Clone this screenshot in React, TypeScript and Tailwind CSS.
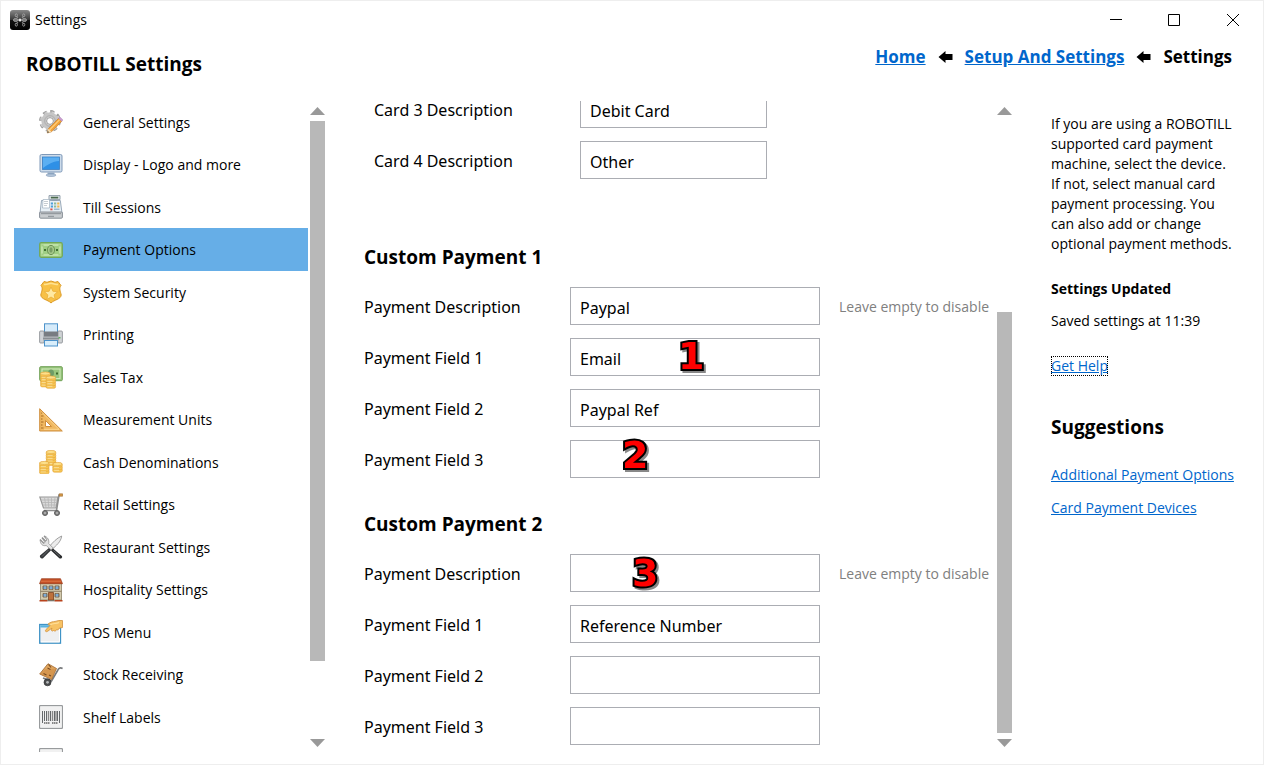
import React from "react";

type IconProps = { children: React.ReactNode };

function Icon({ children }: IconProps) {
  return (
    <svg className="size-6 shrink-0" viewBox="0 0 24 24" fill="none" aria-hidden="true">
      {children}
    </svg>
  );
}

function Coins({ x, y, n }: { x: number; y: number; n: number }) {
  const rows = Array.from({ length: n }, (_, i) => n - 1 - i);
  return (
    <g>
      {rows.map((i) => (
        <g key={i}>
          <rect x={x} y={y + i * 2.6} width="9.6" height="4" rx="1.6" fill="#f7c653" stroke="#e2a53a" strokeWidth=".6" />
          <rect x={x + 1.4} y={y + 1 + i * 2.6} width="5" height="1.4" fill="#fff0b8" />
        </g>
      ))}
      <ellipse cx={x + 4.8} cy={y + 1} rx="4.6" ry="1.6" fill="#fde08a" stroke="#e2a53a" strokeWidth=".6" />
    </g>
  );
}

const icons: Record<string, React.ReactNode> = {
  general: (
    <Icon>
      <circle cx="11" cy="11" r="9.4" stroke="#9a9a9a" strokeWidth="3" strokeDasharray="3.9 3.48" />
      <circle cx="11" cy="11" r="9.2" stroke="#cfcfcf" strokeWidth="1.6" strokeDasharray="3.3 4.08" strokeDashoffset="-.3" />
      <circle cx="11" cy="11" r="6.2" stroke="#c6c6c6" strokeWidth="5" />
      <circle cx="11" cy="11" r="5.4" stroke="#aaa" strokeWidth=".8" />
      <circle cx="11" cy="11" r="3.4" fill="#fff" stroke="#8f8f8f" strokeWidth=".9" />
      <path d="m8.200 23 1.200-4.300L19.600 8.300l3.200 3L12.500 21.800z" fill="#f2a33a" stroke="#bf7420" strokeWidth=".6" />
      <path d="M10.500 20 20.700 9.600" stroke="#ffd07c" strokeWidth="1.200" />
      <path d="m19.600 8.300 1.400-1.200 3 2.800-1.200 1.400z" fill="#c99bd0" stroke="#a983b3" strokeWidth=".4" />
      <path d="m8.200 23 1.200-4.300 3.100 3.100z" fill="#f6deb2" />
      <path d="m8.200 23 .6-2 1.400 1.300z" fill="#444" />
    </Icon>
  ),
  display: (
    <Icon>
      <rect x="1" y="1.500" width="22" height="17.500" rx="1.500" fill="#cddceb" stroke="#7f99b8" />
      <rect x="3.500" y="4" width="17" height="12.500" fill="#2e90e6" stroke="#3c7fc2" strokeWidth=".8" />
      <path d="M4 4.500h16V8c-7 .5-10 3-16 7z" fill="#6bb9f6" opacity=".75" />
      <path d="M8.500 19.500h7v2h-7z" fill="#8ea7c2" />
      <path d="M7 22c0-1.200 10-1.200 10 0 0 2-10 2-10 0z" fill="#b4c7dc" stroke="#8199b5" strokeWidth=".6" />
    </Icon>
  ),
  till: (
    <Icon>
      <path d="M10 .6h11v4H10z" fill="#e8edf1" stroke="#8996a3" strokeWidth=".9" />
      <path d="M11.800 1.700h7.500v1.800h-7.500z" fill="#49694b" />
      <path d="M12.500 4.500h6v1.500h-6z" fill="#9aa7b2" />
      <path d="M2.500 5.500h18.800L23 18H1z" fill="#e7eff5" stroke="#8496a8" strokeWidth=".8" />
      <path d="M4 4.500h6.500v8.500H3.500z" fill="#fff" stroke="#9fb0bf" strokeWidth=".7" />
      <path d="M5 6.500h4M5 8.500h4M5 10.500h3" stroke="#b9c0c6" strokeWidth=".8" />
      <path d="M11.800 7.500h2.200v2h-2.200zM11.800 10.500h2.200v2h-2.200z" fill="#4fa0da" />
      <path d="M15 7.500h2.200v2H15zM15 10.500h2.200v2H15z" fill="#8dbb9b" />
      <path d="M18.200 7.500h2.200v2h-2.200zM18.200 10.500h2.200v2h-2.200z" fill="#efb64e" />
      <path d="M11.300 13.500h2.200v1.800h-2.200z" fill="#d75346" />
      <path d="M15 13.500h5.500v1.500H15z" fill="#9db9cc" />
      <rect x=".6" y="17" width="22.800" height="6.200" rx="1" fill="#c9cdd0" stroke="#7d858d" strokeWidth=".9" />
      <path d="M2 18.700h20M9 21.300h6" stroke="#888e94" strokeWidth="1" />
    </Icon>
  ),
  payment: (
    <Icon>
      <rect x=".7" y="4.700" width="22.600" height="14.600" rx="1.500" fill="#9fce84" stroke="#74a853" strokeWidth="1.200" />
      <rect x="3" y="7" width="18" height="10" stroke="#d4edbd" strokeWidth="1.200" />
      <ellipse cx="12" cy="12" rx="3.600" ry="4.600" fill="#a5c989" stroke="#638a4e" strokeWidth=".9" />
      <ellipse cx="12" cy="12" rx="1.600" ry="2.800" fill="#789e64" />
      <path d="M5 11h2v2H5zm12 0h2v2h-2z" fill="#426f32" />
      <path d="M2.400 6.400h2.200v2.200H2.400zm17 0h2.200v2.200h-2.200zM2.400 15.400h2.200v2.200H2.400zm17 0h2.200v2.200h-2.200z" fill="#9fce84" />
    </Icon>
  ),
  security: (
    <Icon>
      <path d="M5 1.500 8 2.300 12 1l4 1.300 3-.8 3 4c-2.500 3-.4 6 .2 9.500-.4 4.500-7 4.600-10.200 8-3.200-3.400-9.800-3.500-10.200-8C2.400 11.500 4.500 8.500 2 5.500z" fill="#f8c146" stroke="#dc9a26" />
      <path d="M5 4.200c2 .9 5-.7 7-1 2 .3 5 1.900 7 1" stroke="#ffe291" strokeWidth="1.500" />
      <path d="m12 7 1.900 4.300 4.600.5-3.400 3.100 1 4.500L12 17l-4.100 2.400 1-4.500-3.400-3.100 4.600-.5z" fill="#ffe9a2" stroke="#e8aa32" strokeWidth=".7" />
    </Icon>
  ),
  printing: (
    <Icon>
      <rect x="5.500" y=".8" width="13" height="9" fill="#d6ebfa" stroke="#4d93cb" />
      <rect x=".6" y="8" width="4.600" height="12" rx="1" fill="#d0d3d6" stroke="#858a8f" strokeWidth=".8" />
      <rect x="18.800" y="8" width="4.600" height="12" rx="1" fill="#d0d3d6" stroke="#858a8f" strokeWidth=".8" />
      <path d="M4 9h16v9H4z" fill="#b5b9bd" />
      <path d="M5 8.500h14v5H5z" fill="#787c81" />
      <path d="M4 15.500h16" stroke="#8a8f93" strokeWidth="1.500" />
      <rect x="5.500" y="17.500" width="13" height="5.500" fill="#d9eefb" stroke="#4d93cb" />
      <path d="M19.500 14h2v1.500h-2z" fill="#62b45d" />
    </Icon>
  ),
  tax: (
    <Icon>
      <rect x=".7" y="1.700" width="22.600" height="14" rx="1" fill="#98c67d" stroke="#6f9f54" />
      <rect x="3" y="4" width="18" height="9.500" stroke="#d3ecbd" />
      <ellipse cx="12" cy="8" rx="3" ry="3.600" fill="#6e9c66" />
      <path d="M17 7.500h2v2h-2z" fill="#3c692b" />
      <Coins x={1.500} y={7.500} n={5} />
      <Coins x={7} y={11.500} n={4} />
    </Icon>
  ),
  measurement: (
    <Icon>
      <path fillRule="evenodd" clipRule="evenodd" d="M.7.700V23h22.600zM6.500 12.500l6 6h-6z" fill="#f0b860" stroke="#cf8f3e" />
      <path d="M2 5h1.500M2 8h2.500M2 11h1.500M2 14h2.500M2 17h1.500M2 20h2.500" stroke="#a66a22" />
      <path d="m2.500 4 17.500 17.300H5" stroke="#ffdc9b" strokeWidth=".8" />
    </Icon>
  ),
  cash: (
    <Icon>
      <Coins x={7.200} y={1} n={5} />
      <Coins x={0.500} y={12} n={4} />
      <Coins x={13.700} y={13} n={3} />
    </Icon>
  ),
  retail: (
    <Icon>
      <path d="M.8 4h18.200L17 15H4.500z" fill="#dadada" stroke="#989898" strokeWidth="1.200" />
      <path d="M2 7h16.500M3 9.500h15M3.500 12h14M5.500 4.500l1.500 10M9 4.500l.8 10M12.500 4.500v10M16 4.500l-1 10" stroke="#b5b5b5" strokeWidth=".8" />
      <path d="M22 2h-2l-2.500 15.500H5" stroke="#8c8c8c" strokeWidth="1.600" />
      <path d="M20.200.8h3.400v2.400h-3.400z" fill="#d89b47" stroke="#9a672b" strokeWidth=".6" />
      <circle cx="6" cy="20" r="2.500" fill="#808080" stroke="#5e5e5e" />
      <circle cx="18" cy="20" r="2.500" fill="#808080" stroke="#5e5e5e" />
      <circle cx="6" cy="20" r=".8" fill="#ddd" />
      <circle cx="18" cy="20" r=".8" fill="#ddd" />
    </Icon>
  ),
  restaurant: (
    <Icon>
      <path d="M22.700 1C18 3 14 7 10 12l3 2.500C17 10.500 22 7 22.700 1z" fill="#ececec" stroke="#8b8b8b" strokeWidth=".8" />
      <path d="m10.500 12.500 2.300 2L4 23.300C2 24 .4 22.500 1 20.500z" fill="#343638" />
      <path d="m1 4.500 4 4M3 2.500l4 4M5 1l4 4" stroke="#929292" strokeWidth="1.400" />
      <path d="M1.200 5c0 4 2.500 6.500 6 5.500l5 4.500 2-2-4.500-4.500C10.500 5 8.500 2 5.500 1L8 5 6.500 6.500 3 3l3 4.500L4.500 8.500z" fill="#e2e2e2" stroke="#8b8b8b" strokeWidth=".7" />
      <path d="m14 13.500 8.800 7.500c1.200 1.700-.8 3.300-2.500 2.200L12 15.500z" fill="#27292b" />
      <path d="m14.500 15.500 6.500 6M3 21.500l6.500-6.500" stroke="#777a7d" strokeWidth=".8" />
    </Icon>
  ),
  hospitality: (
    <Icon>
      <path d="M1.500 5h21v17h-21z" fill="#d3caae" stroke="#8c8266" strokeWidth=".8" />
      <path d="M2.500.700h19l2 5H.500z" fill="#c44f25" stroke="#9a3b1a" strokeWidth=".7" />
      <path d="M2 3.200h20" stroke="#e07845" strokeWidth="1" />
      <path d="M4 8h4v3.500H4zm6 0h4v3.500h-4zm6 0h4v3.500h-4zM4 15.500h4V19H4zm12 0h4V19h-4z" fill="#5a94ca" stroke="#7f6b52" strokeWidth="1" />
      <path d="M6 8v3.500M12 8v3.500M18 8v3.500M6 15.500V19M18 15.500V19" stroke="#d4e4f1" strokeWidth=".6" />
      <path d="M1.500 13.300h21" stroke="#8f7e63" strokeWidth="1" />
      <path d="M9.500 14.500h5V22h-5z" fill="#be713b" stroke="#7d4421" strokeWidth=".8" />
      <path d="M.5 22h8v1.500h-8zM15.500 22h8v1.500h-8z" fill="#b7431d" />
      <path d="M8.500 22h7v1.300h-7z" fill="#7c7568" />
    </Icon>
  ),
  pos: (
    <Icon>
      <rect x=".7" y="4.500" width="20.800" height="18.700" fill="#eeeff0" stroke="#3f93c6" strokeWidth="1.300" />
      <path d="M1.300 5.200h19.600V7.500H1.300z" fill="#58b2e1" />
      <path d="M2 21.800h18.500V9" stroke="#fff" />
      <path d="M23.500.500h-4C16 2 13 1 9.500 3.500 8 4.700 10.500 5.500 12 4.700L7 9.500c-1.500 1.800.2 3 2 1.500l4-3c-1.500 3 .2 3.700 1.500 2.500 1.500 1 2.500.5 3-.8 1.300.6 2.300-.3 2.700-1.500l3.300-.7z" fill="#f7c264" stroke="#d2913c" strokeWidth=".8" />
      <path d="M11 5c3-2 6-1 9-2.500" stroke="#ffdf98" strokeWidth="1.200" />
    </Icon>
  ),
  stock: (
    <Icon>
      <path d="M23.600 5.600c-2.600-1.400-4.200-.4-5.200 2.400L12.500 18 4 15" stroke="#77797b" strokeWidth="1.700" />
      <path d="M9 .7 17.500 5.500 12.500 16.500.7 11z" fill="#e0a65e" stroke="#9e662f" strokeWidth=".8" />
      <path d="m.7 11 5-4.500L17.500 5.500l-5 11z" fill="#c9863d" opacity=".5" />
      <path d="m9.500 1.500 2.500 3M8.500 5l3 1.500M10 12l2 1M4.500 10.500l3 1.500" stroke="#77491f" strokeWidth="1.100" />
      <circle cx="8.500" cy="19.300" r="3.500" fill="#4a4c4e" stroke="#2f3031" strokeWidth=".7" />
      <circle cx="8.500" cy="19.300" r="1.400" fill="#b4b7b9" />
    </Icon>
  ),
  labels: (
    <Icon>
      <rect x=".6" y=".6" width="22.800" height="22.800" rx=".6" fill="#fff" stroke="#989b9d" strokeWidth="1.200" />
      <path d="M2 2h20v20H2z" fill="#f1f1f1" />
      <path d="M3.500 6v12M5.500 6v10M7.500 6v10M11.500 6v10M15.500 6v10M18.500 6v10M20.500 6v12" stroke="#66696b" strokeWidth="1" />
      <path d="M9.500 6v10M13.500 6v10M17 6v10" stroke="#888" strokeWidth="1.400" />
      <path d="M5 18h6M13 18h6" stroke="#666" strokeWidth="1.400" strokeDasharray="1.500 .5" />
    </Icon>
  ),
};

const navItems: [string, string][] = [
  ["general", "General Settings"],
  ["display", "Display - Logo and more"],
  ["till", "Till Sessions"],
  ["payment", "Payment Options"],
  ["security", "System Security"],
  ["printing", "Printing"],
  ["tax", "Sales Tax"],
  ["measurement", "Measurement Units"],
  ["cash", "Cash Denominations"],
  ["retail", "Retail Settings"],
  ["restaurant", "Restaurant Settings"],
  ["hospitality", "Hospitality Settings"],
  ["pos", "POS Menu"],
  ["stock", "Stock Receiving"],
  ["labels", "Shelf Labels"],
];

function ScrollBar({ before, thumb, after }: { before: number; thumb: number; after: number }) {
  return (
    <div className="flex w-[15px] shrink-0 flex-col items-stretch pt-[6px] pb-[5px]">
      <svg className="h-2 w-full" viewBox="0 0 15 8" aria-hidden="true">
        <path d="M0 8 7.500 0 15 8z" fill="#999" />
      </svg>
      <div className="my-[6px] flex flex-1 flex-col">
        <div style={{ flexGrow: before }} />
        <div className="bg-[#b8b8b8]" style={{ flexGrow: thumb }} />
        <div style={{ flexGrow: after }} />
      </div>
      <svg className="h-2 w-full" viewBox="0 0 15 8" aria-hidden="true">
        <path d="M0 0 7.500 8 15 0z" fill="#999" />
      </svg>
    </div>
  );
}

const badgeClass =
  "pointer-events-none absolute font-['DejaVu_Sans',sans-serif] text-[38px] leading-[38px] font-bold text-[#ff0000] [-webkit-text-stroke:4px_#000] [paint-order:stroke_fill] [filter:drop-shadow(2px_2px_0_#888)]";

const labelClass = "w-[206px] shrink-0 pt-[2px] font-['Noto_Sans',sans-serif] text-base leading-[18px]";

const inputClass =
  "block h-[38px] w-full border border-[#abadb3] bg-white px-[9px] pt-[3px] font-['Noto_Sans',sans-serif] text-base leading-[18px] outline-none";

type FieldProps = {
  id: string;
  label: string;
  value?: string;
  hint?: string;
  badge?: string;
  badgePos?: string;
};

function Field({ id, label, value = "", hint, badge, badgePos }: FieldProps) {
  return (
    <div className="flex items-center">
      <label htmlFor={id} className={labelClass}>
        {label}
      </label>
      <div className="relative w-[250px] shrink-0">
        <input id={id} defaultValue={value} className={inputClass} />
        {badge && <span className={`${badgeClass} ${badgePos}`}>{badge}</span>}
      </div>
      {hint && <span className="ml-[19px] pt-[2px] text-sm whitespace-nowrap text-[#808080]">{hint}</span>}
    </div>
  );
}

function CardField({ id, label, value }: { id: string; label: string; value: string }) {
  return (
    <div className="flex items-center pl-[10px]">
      <label htmlFor={id} className={labelClass}>
        {label}
      </label>
      <div className="w-[187px] shrink-0">
        <input id={id} defaultValue={value} className={inputClass} />
      </div>
    </div>
  );
}

function CrumbArrow() {
  return (
    <svg className="mx-3 h-3 w-[15px]" viewBox="0 0 15 12" aria-hidden="true">
      <path d="M.5 6 7.500 0v3H14.500v6H7.500v3z" fill="#000" />
    </svg>
  );
}

export default function App() {
  return (
    <div className="relative flex h-screen flex-col overflow-hidden border border-[#eee] bg-white font-['Open_Sans','Noto_Sans',sans-serif] text-black">
      <svg className="absolute top-0 -left-px h-[600px] w-px" viewBox="0 0 1 600" preserveAspectRatio="none" aria-hidden="true">
        <path d="M0 101h1v9H0zM0 282h1v2H0zM0 496h1v3H0zM0 526h1v5H0z" fill="#5c1c00" />
        <path d="M0 293h1v2H0zM0 507h1v2H0z" fill="#10204c" />
        <path d="M0 494h1v2H0zM0 524h1v2H0zM0 531h1v1H0zM0 292h1v1H0z" fill="#e8a64e" />
        <path d="M0 387h1v1H0zM0 573h1v1H0z" fill="#999" />
      </svg>

      <header className="flex h-[37px] shrink-0 items-center justify-between">
        <div className="flex items-center gap-[5px] pl-[9px]">
          <svg className="size-5" viewBox="0 0 20 20" aria-hidden="true">
            <defs>
              <linearGradient id="appIcon" x1="0" y1="0" x2="0" y2="1">
                <stop offset="0" stopColor="#8a8a8a" />
                <stop offset=".48" stopColor="#3a3a3a" />
                <stop offset=".52" stopColor="#111" />
                <stop offset="1" stopColor="#000" />
              </linearGradient>
            </defs>
            <rect width="20" height="20" rx="3" fill="url(#appIcon)" />
            <g fill="none" stroke="#aaa" strokeWidth=".8">
              <path d="m8 8-1.500-2M12 8l1.500-2M8 12l-1.500 2M12 12l1.500 2" />
              <ellipse cx="6.300" cy="5.300" rx="1.100" ry="1.500" />
              <ellipse cx="13.700" cy="5.300" rx="1.100" ry="1.500" />
              <ellipse cx="6.300" cy="14.700" rx="1.100" ry="1.500" />
              <ellipse cx="13.700" cy="14.700" rx="1.100" ry="1.500" />
              <ellipse cx="5.700" cy="10" rx="2.300" ry="1.500" fill="#777" />
              <ellipse cx="14.300" cy="10" rx="2.300" ry="1.500" fill="#777" />
            </g>
            <circle cx="10" cy="10" r="1.600" fill="#e5e5e5" />
          </svg>
          <span className="text-sm">Settings</span>
        </div>
        <div className="flex h-full">
          <button aria-label="Minimize" className="flex w-[58px] items-center justify-center">
            <svg className="size-3" viewBox="0 0 12 12"><path d="M0 5.500h12" stroke="#000" /></svg>
          </button>
          <button aria-label="Maximize" className="flex w-[58px] items-center justify-center">
            <svg className="size-3" viewBox="0 0 12 12"><path d="M.5.500h11v11H.5z" fill="none" stroke="#000" /></svg>
          </button>
          <button aria-label="Close" className="flex w-[60px] items-center justify-center">
            <svg className="size-3" viewBox="0 0 12 12"><path d="m0 0 12 12M12 0 0 12" stroke="#000" /></svg>
          </button>
        </div>
      </header>

      <div className="flex h-[63px] shrink-0 items-start justify-between pr-[31px] pl-[25px]">
        <h1 className="pt-3 text-[19px] leading-7 font-bold">ROBOTILL Settings</h1>
        <nav aria-label="Breadcrumb" className="flex items-center pt-[5px] text-[17px] leading-7 font-bold">
          <a href="#home" className="text-[#0066cc] underline">Home</a>
          <CrumbArrow />
          <a href="#setup" className="text-[#0066cc] underline">Setup And Settings</a>
          <CrumbArrow />
          <span>Settings</span>
        </nav>
      </div>

      <div className="mb-3 flex min-h-0 flex-1">
        <nav aria-label="Settings sections" className="ml-[13px] w-[294px] shrink-0 overflow-hidden">
          <ul>
            {navItems.map(([key, label]) => (
              <li key={key} className="odd:h-[42px] even:h-[43px]">
                <a
                  href={`#${key}`}
                  className={`flex h-full items-center gap-5 pl-[25px] text-sm ${key === "payment" ? "bg-[#66aee7]" : ""}`}
                >
                  {icons[key]}
                  <span className="pt-px">{label}</span>
                </a>
              </li>
            ))}
            <li className="flex h-[43px] items-center pl-[25px]">{icons.labels}</li>
          </ul>
        </nav>
        <div className="ml-[2px] flex">
          <ScrollBar before={0} thumb={539} after={72} />
        </div>

        <main className="ml-[39px] min-w-0 flex-1 overflow-hidden">
          <div className="-mt-[11px] flex flex-col gap-[13px]">
            <CardField id="card3" label="Card 3 Description" value="Debit Card" />
            <CardField id="card4" label="Card 4 Description" value="Other" />
          </div>
          <section className="mt-16 flex flex-col gap-[13px]">
            <h2 className="mb-[3px] text-[19px] leading-7 font-bold">Custom Payment 1</h2>
            <Field id="p1d" label="Payment Description" value="Paypal" hint="Leave empty to disable" />
            <Field id="p1f1" label="Payment Field 1" value="Email" badge="1" badgePos="-top-px left-[108px]" />
            <Field id="p1f2" label="Payment Field 2" value="Paypal Ref" />
            <Field id="p1f3" label="Payment Field 3" badge="2" badgePos="-top-1 left-[52px]" />
          </section>
          <section className="mt-8 flex flex-col gap-[13px]">
            <h2 className="mb-[3px] text-[19px] leading-7 font-bold">Custom Payment 2</h2>
            <Field id="p2d" label="Payment Description" hint="Leave empty to disable" badge="3" badgePos="top-0 left-[62px]" />
            <Field id="p2f1" label="Payment Field 1" value="Reference Number" />
            <Field id="p2f2" label="Payment Field 2" />
            <Field id="p2f3" label="Payment Field 3" />
          </section>
        </main>
        <ScrollBar before={191} thumb={420} after={0} />

        <aside className="ml-[39px] w-[212px] shrink-0 pt-[13px] text-sm">
          <p className="w-[185px] leading-5">
            If you are using a ROBOTILL supported card payment machine, select the device. If not, select manual card
            payment processing. You can also add or change optional payment methods.
          </p>
          <h3 className="mt-[25px] leading-5 font-bold">Settings Updated</h3>
          <p className="mt-3 leading-5">Saved settings at 11:39</p>
          <a href="#help" className="mt-[25px] inline-block leading-5 text-[#0066cc] underline outline-1 outline-dotted -outline-offset-1 outline-black">
            Get Help
          </a>
          <h2 className="mt-[37px] text-[19px] leading-7 font-bold">Suggestions</h2>
          <ul className="mt-6 flex flex-col gap-[13px] leading-5">
            <li><a href="#options" className="text-[#0066cc] underline">Additional Payment Options</a></li>
            <li><a href="#devices" className="text-[#0066cc] underline">Card Payment Devices</a></li>
          </ul>
        </aside>
      </div>
    </div>
  );
}
